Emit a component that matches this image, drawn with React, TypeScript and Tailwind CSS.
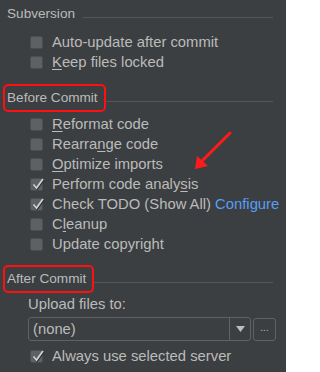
import React from "react";

const font = { fontFamily: '"Liberation Sans", Arial, sans-serif' };

function Box({ checked }: { checked?: boolean }) {
  return (
    <span className="relative w-[13px] h-[13px] shrink-0 rounded-[2px] border border-[#4b4e50] bg-[#5e6163] flex items-center justify-center">
      {checked && (
        <svg width="14" height="14" viewBox="0 0 14 14" className="absolute left-[0px] top-[-2px]">
          <path d="M2.5 7.5 L5.5 11 L12 2" fill="none" stroke="#2a2b2c" strokeWidth="2.2" transform="translate(0.5,0.8)" />
          <path d="M2.5 7.5 L5.5 11 L12 2" fill="none" stroke="#d0d0d0" strokeWidth="1.8" />
        </svg>
      )}
    </span>
  );
}

function Heading({ text, red }: { text: string; red?: boolean }) {
  return (
    <div className="flex items-center h-[28px] pl-[3px] pr-[13px]">
      <span
        className={`h-[28px] flex items-center pl-[2px] pr-[6px] border-2 rounded-[5px] text-[13.6px] text-[#bbbbbb] ${
          red ? "border-[#ff0f0f]" : "border-transparent"
        }`}
      >
        {text}
      </span>
      <div className="flex-1 h-px bg-[#545657] mt-[6px]" />
    </div>
  );
}

function Row({ checked, children }: { checked?: boolean; children: React.ReactNode }) {
  return (
    <div className="flex items-center h-[20px] pl-[30px] gap-[9px] text-[14.8px] text-[#bbbbbb] whitespace-nowrap">
      <Box checked={checked} />
      <span>{children}</span>
    </div>
  );
}

const U = ({ c }: { c: string }) => <span className="underline underline-offset-2">{c}</span>;

export default function App() {
  return (
    <div className="relative w-[286px] h-[372px] bg-[#3c3f41] overflow-hidden" style={font}>
      <div className="flex flex-col">
        <Heading text="Subversion" />
        <div className="mt-[4px]">
          <Row>Auto-update after commit</Row>
          <Row>
            <U c="K" />eep files locked
          </Row>
        </div>
        <div className="mt-[12px]">
          <Heading text="Before Commit" red />
        </div>
        <div className="mt-[2px]">
          <Row>
            <U c="R" />eformat code
          </Row>
          <Row>
            Rearra<U c="n" />ge code
          </Row>
          <Row>
            <U c="O" />ptimize imports
          </Row>
          <Row checked>
            Perform code analy<U c="s" />is
          </Row>
          <Row checked>
            Check TODO (Show All) <span className="text-[#589df6]">Configure</span>
          </Row>
          <Row>
            C<U c="l" />eanup
          </Row>
          <Row>Update copyright</Row>
        </div>
        <div className="mt-[11px]">
          <Heading text="After Commit" red />
        </div>
        <div className="mt-[1px] h-[20px] flex items-center pl-[28px] text-[14.8px] text-[#bbbbbb]">
          Upload files to:
        </div>
        <div className="mt-[3px] flex items-center pl-[28px] gap-[2px]">
          <div className="w-[223px] h-[24px] rounded-[3px] border border-[#5f6162] flex items-center">
            <span className="flex-1 pl-[4px] text-[14.8px] text-[#bbbbbb]">(none)</span>
            <div className="w-[21px] h-full border-l border-[#5f6162] flex items-center justify-center">
              <svg width="9" height="6" viewBox="0 0 9 6">
                <path d="M0 0 H9 L4.5 6 Z" fill="#bdbdbd" />
              </svg>
            </div>
          </div>
          <div className="w-[23px] h-[23px] rounded-[3px] border border-[#5f6162] flex items-center justify-center text-[10px] text-[#bbbbbb] leading-none pb-[3px]">
            ...
          </div>
        </div>
        <div className="mt-[5px]">
          <Row checked>Always use selected server</Row>
        </div>
      </div>
      <svg className="absolute left-0 top-0 pointer-events-none" width="286" height="372">
        <line x1="230" y1="133" x2="202" y2="161" stroke="#ff1a1a" strokeWidth="3" strokeLinecap="round" />
        <polygon points="195,169 197,156 208,166" fill="#ff1a1a" />
      </svg>
    </div>
  );
}
